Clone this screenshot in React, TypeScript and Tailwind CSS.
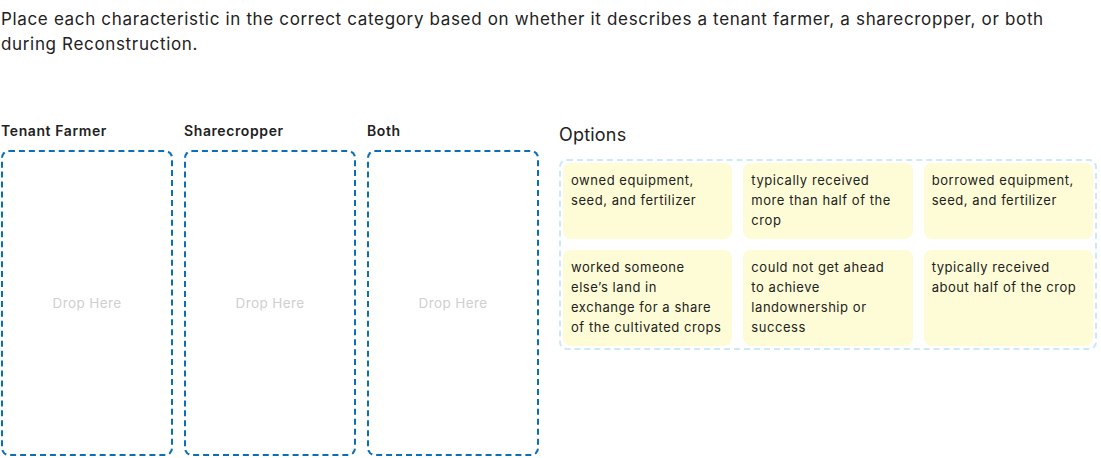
import React from "react";

const columns = ["Tenant Farmer", "Sharecropper", "Both"];

// lines broken by hand so the wrap matches the design
const options = [
  ["owned equipment,", "seed, and fertilizer"],
  ["typically received", "more than half of the", "crop"],
  ["borrowed equipment,", "seed, and fertilizer"],
  ["worked someone", "else’s land in", "exchange for a share", "of the cultivated crops"],
  ["could not get ahead", "to achieve", "landownership or", "success"],
  ["typically received", "about half of the crop"],
];

const App = () => {
  return (
    <div className="w-[1101px] h-[458px] overflow-hidden bg-white text-[#222] font-['Inter','Open_Sans',sans-serif]">
      <p className="pl-[1px] pt-[7px] text-[17px] leading-[25px] tracking-[0.66px] w-[1068px]">
        Place each characteristic in the correct category based on whether it describes a tenant farmer, a sharecropper, or
        both during Reconstruction.
      </p>

      <div className="flex gap-[20px] mt-[64px] pl-[1px]">
        {/* drop targets */}
        <div className="flex gap-[11px]">
          {columns.map((col) => (
            <div key={col} className="w-[172px] flex flex-col">
              <h3 className="text-[14px] font-semibold leading-[20px] h-[20px] tracking-[0.6px] text-[#222]">{col}</h3>
              <div className="mt-[9px] h-[306px] rounded-[8px] border-2 border-dashed border-[#0a6fb8] flex items-center justify-center">
                <span className="text-[13.5px] tracking-[0.4px] text-[#d0d0d0]">Drop Here</span>
              </div>
            </div>
          ))}
        </div>

        {/* options */}
        <div className="w-[538px] flex flex-col">
          <h3 className="text-[18px] leading-[24px] mt-[2px] tracking-[0.2px] text-[#222]">Options</h3>
          <div className="mt-[12px] rounded-[8px] border-2 border-dashed border-[#cde8f6] p-[2px] grid grid-cols-3 gap-[11px]">
            {options.map((lines, i) => (
              <div
                key={i}
                className="rounded-[8px] bg-[#fefcd6] pl-[8px] pr-[6px] pt-[7px] pb-[9px] text-[13px] leading-[20px] tracking-[0.55px] text-[#222]"
              >
                {lines.map((l, j) => (
                  <span key={j} className="block whitespace-nowrap">
                    {l}
                  </span>
                ))}
              </div>
            ))}
          </div>
        </div>
      </div>
    </div>
  );
};

export default App;
